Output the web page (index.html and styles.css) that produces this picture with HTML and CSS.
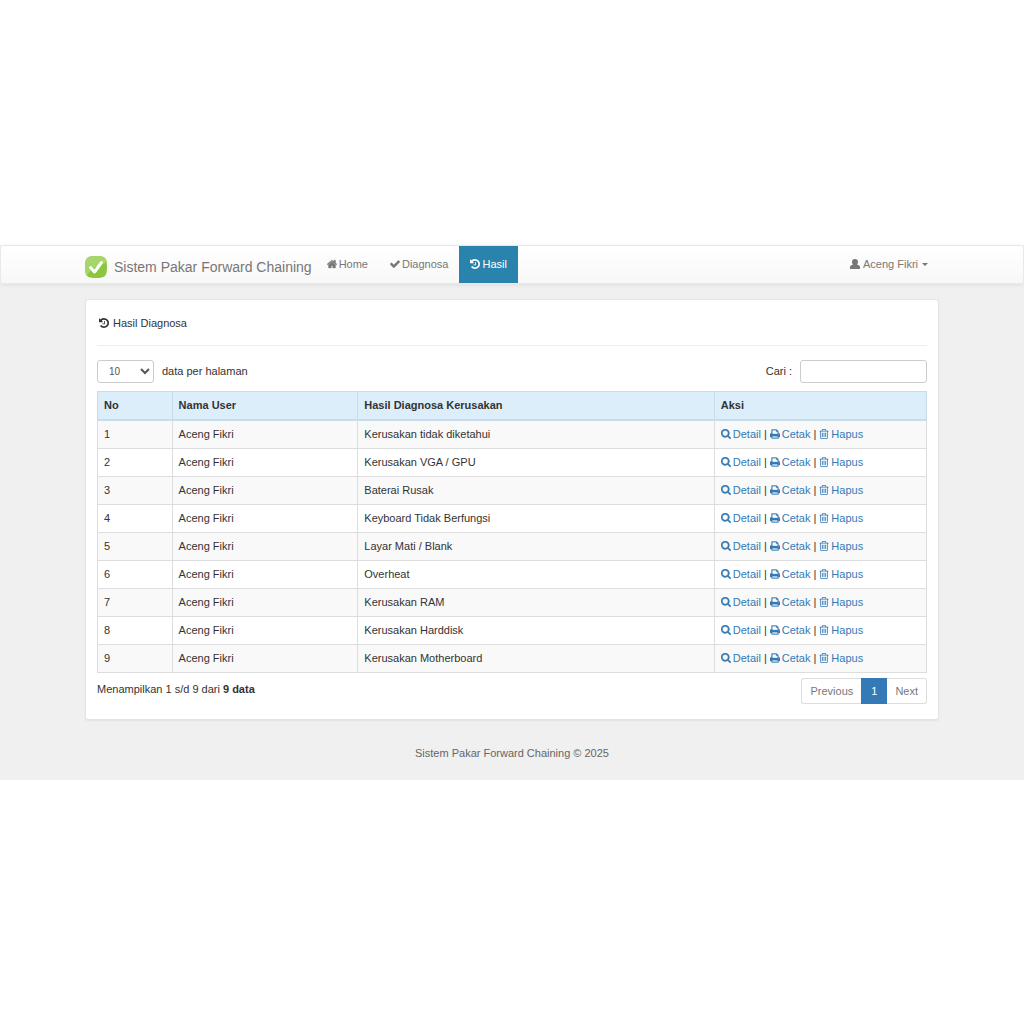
FILE: index.html
```html
<!DOCTYPE html>
<html lang="id">
<head>
    <meta charset="UTF-8">
    <meta name="viewport" content="width=device-width, initial-scale=1.0">
    <title>Sistem Pakar Forward Chaining</title>
    <link rel="stylesheet" href="styles.css">
</head>
<body>
    <svg class="sprite" aria-hidden="true">
        <symbol id="home" viewBox="64 180 1664 1400"><path stroke="currentColor" stroke-width="70" d="M1472 992v480q0 26-19 45t-45 19h-384v-384h-256v384h-384q-26 0-45-19t-19-45v-480q0-1 .5-3t.5-3l575-474 575 474q1 2 1 6zm223-69l-62 74q-8 9-21 11h-3q-13 0-21-7l-692-577-692 577q-12 8-24 7-13-2-21-11l-62-74q-8-10-7-23.5t11-21.5l719-599q32-26 76-26t76 26l244 204v-195q0-14 9-23t23-9h192q14 0 23 9t9 23v408l219 182q10 8 11 21.5t-7 23.5z"/></symbol>
        <symbol id="check" viewBox="120 180 1552 1440"><path d="M1671 566q0 40-28 68l-724 724-136 136q-28 28-68 28t-68-28l-136-136-362-362q-28-28-28-68t28-68l136-136q28-28 68-28t68 28l294 295 656-657q28-28 68-28t68 28l136 136q28 28 28 68z"/></symbol>
        <symbol id="history" viewBox="128 128 1536 1536"><path d="M1664 896q0 156-61 298t-164 245-245 164-298 61q-172 0-327-72.5t-264-204.5q-7-10-6.5-22.5t8.5-20.5l137-138q10-9 25-9 16 2 23 12 73 95 179 147t225 52q104 0 198.5-40.5t163.5-109.5 109.5-163.5 40.5-198.5-40.5-198.5-109.5-163.5-163.5-109.5-198.5-40.5q-98 0-188 35.5t-160 101.5l137 138q31 30 14 69-17 40-59 40h-448q-26 0-45-19t-19-45v-448q0-42 40-59 39-17 69 14l130 129q107-101 244.5-156.5t284.5-55.5q156 0 298 61t245 164 164 245 61 298zm-640-288v448q0 14-9 23t-23 9h-320q-14 0-23-9t-9-23v-64q0-14 9-23t23-9h224v-352q0-14 9-23t23-9h64q14 0 23 9t9 23z"/></symbol>
        <symbol id="user" viewBox="0 0 20 20"><path d="M10 0c4 0 6 2 6 6 0 2-1 4-2 5 3 1 6 2 6 5v3q0 1-1 1H1q-1 0-1-1v-3c0-3 3-4 6-5-1-1-2-3-2-5 0-4 2-6 6-6z"/></symbol>
        <symbol id="search" viewBox="64 128 1664 1664"><path stroke="currentColor" stroke-width="50" d="M1216 832q0-185-131.5-316.5t-316.5-131.5-316.5 131.5-131.5 316.5 131.5 316.5 316.5 131.5 316.5-131.5 131.5-316.5zm512 832q0 52-38 90t-90 38q-54 0-90-38l-343-342q-179 124-399 124-143 0-273.5-55.5t-225-150-150-225-55.5-273.5 55.5-273.5 150-225 225-150 273.5-55.5 273.5 55.5 225 150 150 225 55.5 273.5q0 220-124 399l343 343q37 37 37 90z"/></symbol>
        <symbol id="print" viewBox="64 64 1664 1664"><path stroke="currentColor" stroke-width="50" d="M448 1536h896v-256h-896v256zm0-640h896v-384h-160q-40 0-68-28t-28-68v-160h-640v640zm1152 64q0-26-19-45t-45-19-45 19-19 45 19 45 45 19 45-19 19-45zm128 0v416q0 13-9.5 22.5t-22.5 9.5h-224v160q0 40-28 68t-68 28h-960q-40 0-68-28t-28-68v-160h-224q-13 0-22.5-9.5t-9.5-22.5v-416q0-79 56.5-135.5t135.5-56.5h64v-544q0-40 28-68t68-28h672q40 0 88 20t76 48l152 152q28 28 48 76t20 88v256h64q79 0 135.5 56.5t56.5 135.5z"/></symbol>
        <symbol id="trash" viewBox="192 128 1408 1536"><path d="M704 736v576q0 14-9 23t-23 9h-64q-14 0-23-9t-9-23v-576q0-14 9-23t23-9h64q14 0 23 9t9 23zm256 0v576q0 14-9 23t-23 9h-64q-14 0-23-9t-9-23v-576q0-14 9-23t23-9h64q14 0 23 9t9 23zm256 0v576q0 14-9 23t-23 9h-64q-14 0-23-9t-9-23v-576q0-14 9-23t23-9h64q14 0 23 9t9 23zm128 724v-948h-896v948q0 22 7 40.5t14.5 27 10.5 8.5h832q3 0 10.5-8.5t14.5-27 7-40.5zm-672-1076h448l-48-117q-7-9-17-11h-317q-10 2-17 11zm928 32v64q0 14-9 23t-23 9h-96v948q0 83-47 143.5t-113 60.5h-832q-66 0-113-58.5t-47-141.5v-952h-96q-14 0-23-9t-9-23v-64q0-14 9-23t23-9h309l70-167q15-37 54-63t79-26h320q40 0 79 26t54 63l70 167h309q14 0 23 9t9 23z"/></symbol>
    </svg>

    <div class="page">
        <header class="navbar">
            <div class="container navbar-inner">
                <a class="brand" href="#">
                    <svg class="logo" viewBox="0 0 22 22" aria-hidden="true">
                        <path fill="#8cc63f" d="M11 0c9 0 11 2 11 11s-2 11-11 11S0 20 0 11 2 0 11 0z"/>
                        <path fill="#a5d56b" d="M11 0c8 0 10 1 11 7C14 8 5 13 2 20 0 18 0 15 0 11 0 2 2 0 11 0z"/>
                        <path fill="none" stroke="#fff" stroke-width="3" stroke-linecap="round" stroke-linejoin="round" d="M5.500 11.500l4 4.500 7-9.500"/>
                    </svg>
                    Sistem Pakar Forward Chaining
                </a>
                <nav class="menu">
                    <a href="#"><svg class="icon"><use href="#home"/></svg>Home</a>
                    <a href="#"><svg class="icon"><use href="#check"/></svg>Diagnosa</a>
                    <a class="active" href="#"><svg class="icon"><use href="#history"/></svg>Hasil</a>
                </nav>
                <button type="button" class="account"><svg class="icon"><use href="#user"/></svg>Aceng Fikri<span class="caret"></span></button>
            </div>
        </header>

        <main class="container panel">
            <h1 class="title"><svg class="icon"><use href="#history"/></svg>Hasil Diagnosa</h1>
            <div class="toolbar">
                <label class="length">
                    <select>
                        <option>10</option>
                        <option>25</option>
                        <option>50</option>
                    </select>
                    data per halaman
                </label>
                <label class="filter">Cari : <input type="search"></label>
            </div>
            <table>
                <thead>
                    <tr>
                        <th scope="col" class="col-no">No</th>
                        <th scope="col" class="col-user">Nama User</th>
                        <th scope="col" class="col-result">Hasil Diagnosa Kerusakan</th>
                        <th scope="col">Aksi</th>
                    </tr>
                </thead>
                <tbody></tbody>
            </table>
            <div class="bottom">
                <div>Menampilkan 1 s/d 9 dari <b>9 data</b></div>
                <div class="pagination">
                    <button type="button">Previous</button>
                    <button type="button" class="current">1</button>
                    <button type="button">Next</button>
                </div>
            </div>
        </main>

        <footer>Sistem Pakar Forward Chaining © 2025</footer>
    </div>

    <script>
        const results = [
            'Kerusakan tidak diketahui',
            'Kerusakan VGA / GPU',
            'Baterai Rusak',
            'Keyboard Tidak Berfungsi',
            'Layar Mati / Blank',
            'Overheat',
            'Kerusakan RAM',
            'Kerusakan Harddisk',
            'Kerusakan Motherboard'
        ];

        function action(icon, text){
            return `<a href="#"><svg class="icon"><use href="#${icon}"/></svg>${text}</a>`;
        }

        document.querySelector('tbody').innerHTML = results.map((result, i) => `
            <tr>
                <td>${i + 1}</td>
                <td>Aceng Fikri</td>
                <td>${result}</td>
                <td class="actions">${action('search', 'Detail')}|${action('print', 'Cetak')}|${action('trash', 'Hapus')}</td>
            </tr>`).join('');
    </script>
</body>
</html>
```
FILE: styles.css
```css
* {
    box-sizing: border-box;
}

body {
    display: flex;
    flex-direction: column;
    justify-content: center;
    min-height: 100vh;
    margin: 0;
    background: #fff;
    font-family: "Liberation Sans", Arial, sans-serif;
    font-size: 11px;
    line-height: 15px;
    color: #333;
}

a {
    color: #337ab7;
    text-decoration: none;
}

button,
select,
input {
    font: inherit;
    color: inherit;
}

.sprite {
    position: absolute;
    width: 0;
    height: 0;
}

.icon {
    width: 10px;
    height: 10px;
    margin-right: 2px;
    fill: currentColor;
    vertical-align: -1px;
}

.page {
    background: #f0f0f0;
}

.container {
    width: calc(100% - 32px);
    max-width: 854px;
    margin: 0 auto;
}

/* navbar */
.navbar {
    border: 1px solid #e9e9e9;
    border-radius: 3px;
    background: linear-gradient(#fff, #f8f8f8);
    box-shadow: 0 1px 4px rgba(0, 0, 0, 0.08);
}

.navbar-inner {
    display: flex;
    align-items: stretch;
}

.brand {
    display: flex;
    align-items: center;
    gap: 7px;
    padding: 6px 4px 0 0;
    font-size: 14px;
    color: #777;
}

.logo {
    width: 22px;
    height: 22px;
}

.menu {
    display: flex;
}

.menu a,
.account {
    padding: 11px;
    color: #777;
}

.menu a.active {
    background: #2a83ad;
    color: #fff;
}

.account {
    margin-left: auto;
    border: 0;
    background: none;
}

.account .icon {
    height: 10px;
    margin-right: 3px;
}

.caret {
    display: inline-block;
    margin-left: 4px;
    border: 3px solid transparent;
    border-top-color: currentColor;
    border-bottom: 0;
    vertical-align: middle;
}

/* panel */
.panel {
    margin-top: 15px;
    padding: 16px 11px 15px;
    border: 1px solid #e4e4e4;
    border-radius: 3px;
    background: #fff;
    box-shadow: 0 1px 2px rgba(0, 0, 0, 0.06);
}

.title {
    margin: 0 0 14px;
    padding: 0 2px 14px;
    border-bottom: 1px solid #eee;
    font-size: 11px;
    font-weight: normal;
}

.title .icon {
    margin-right: 4px;
}

.toolbar,
.bottom {
    display: flex;
    justify-content: space-between;
}

.toolbar {
    margin-bottom: 8px;
}

.length,
.filter {
    display: flex;
    align-items: center;
    gap: 8px;
}

select,
input {
    height: 23px;
    border: 1px solid #ccc;
    border-radius: 3px;
    background: #fff;
}

select {
    width: 57px;
    padding: 0 0 0 7px;
    font-size: 10px;
    color: #555;
}

input {
    width: 127px;
    padding: 0 8px;
}

/* table */
table {
    width: 100%;
    border-collapse: collapse;
    table-layout: fixed;
}

th,
td {
    padding: 6px;
    border: 1px solid #ddd;
    text-align: left;
}

th {
    border-color: #c8dcea;
    border-bottom: 2px solid #c8dcea;
    background: #dceefa;
}

tbody tr:nth-child(odd) {
    background: #f9f9f9;
}

.col-no {
    width: 9%;
}

.col-user {
    width: 22.4%;
}

.col-result {
    width: 43%;
}

.actions a + a {
    margin-left: 3px;
}

.actions a {
    margin-right: 3px;
}

/* table footer */
.bottom {
    padding-top: 5px;
    line-height: 23px;
}

.pagination {
    display: flex;
}

.pagination button {
    padding: 4px 8px;
    border: 1px solid #ddd;
    background: #fff;
    line-height: 16px;
    color: #777;
}

.pagination button:first-child {
    border-right: 0;
    border-radius: 3px 0 0 3px;
}

.pagination button:last-child {
    border-left: 0;
    border-radius: 0 3px 3px 0;
}

.pagination .current {
    padding: 4px 9px;
    border-color: #337ab7;
    background: #337ab7;
    color: #fff;
}

footer {
    padding: 26px 0 19px;
    text-align: center;
    color: #666;
}
```
